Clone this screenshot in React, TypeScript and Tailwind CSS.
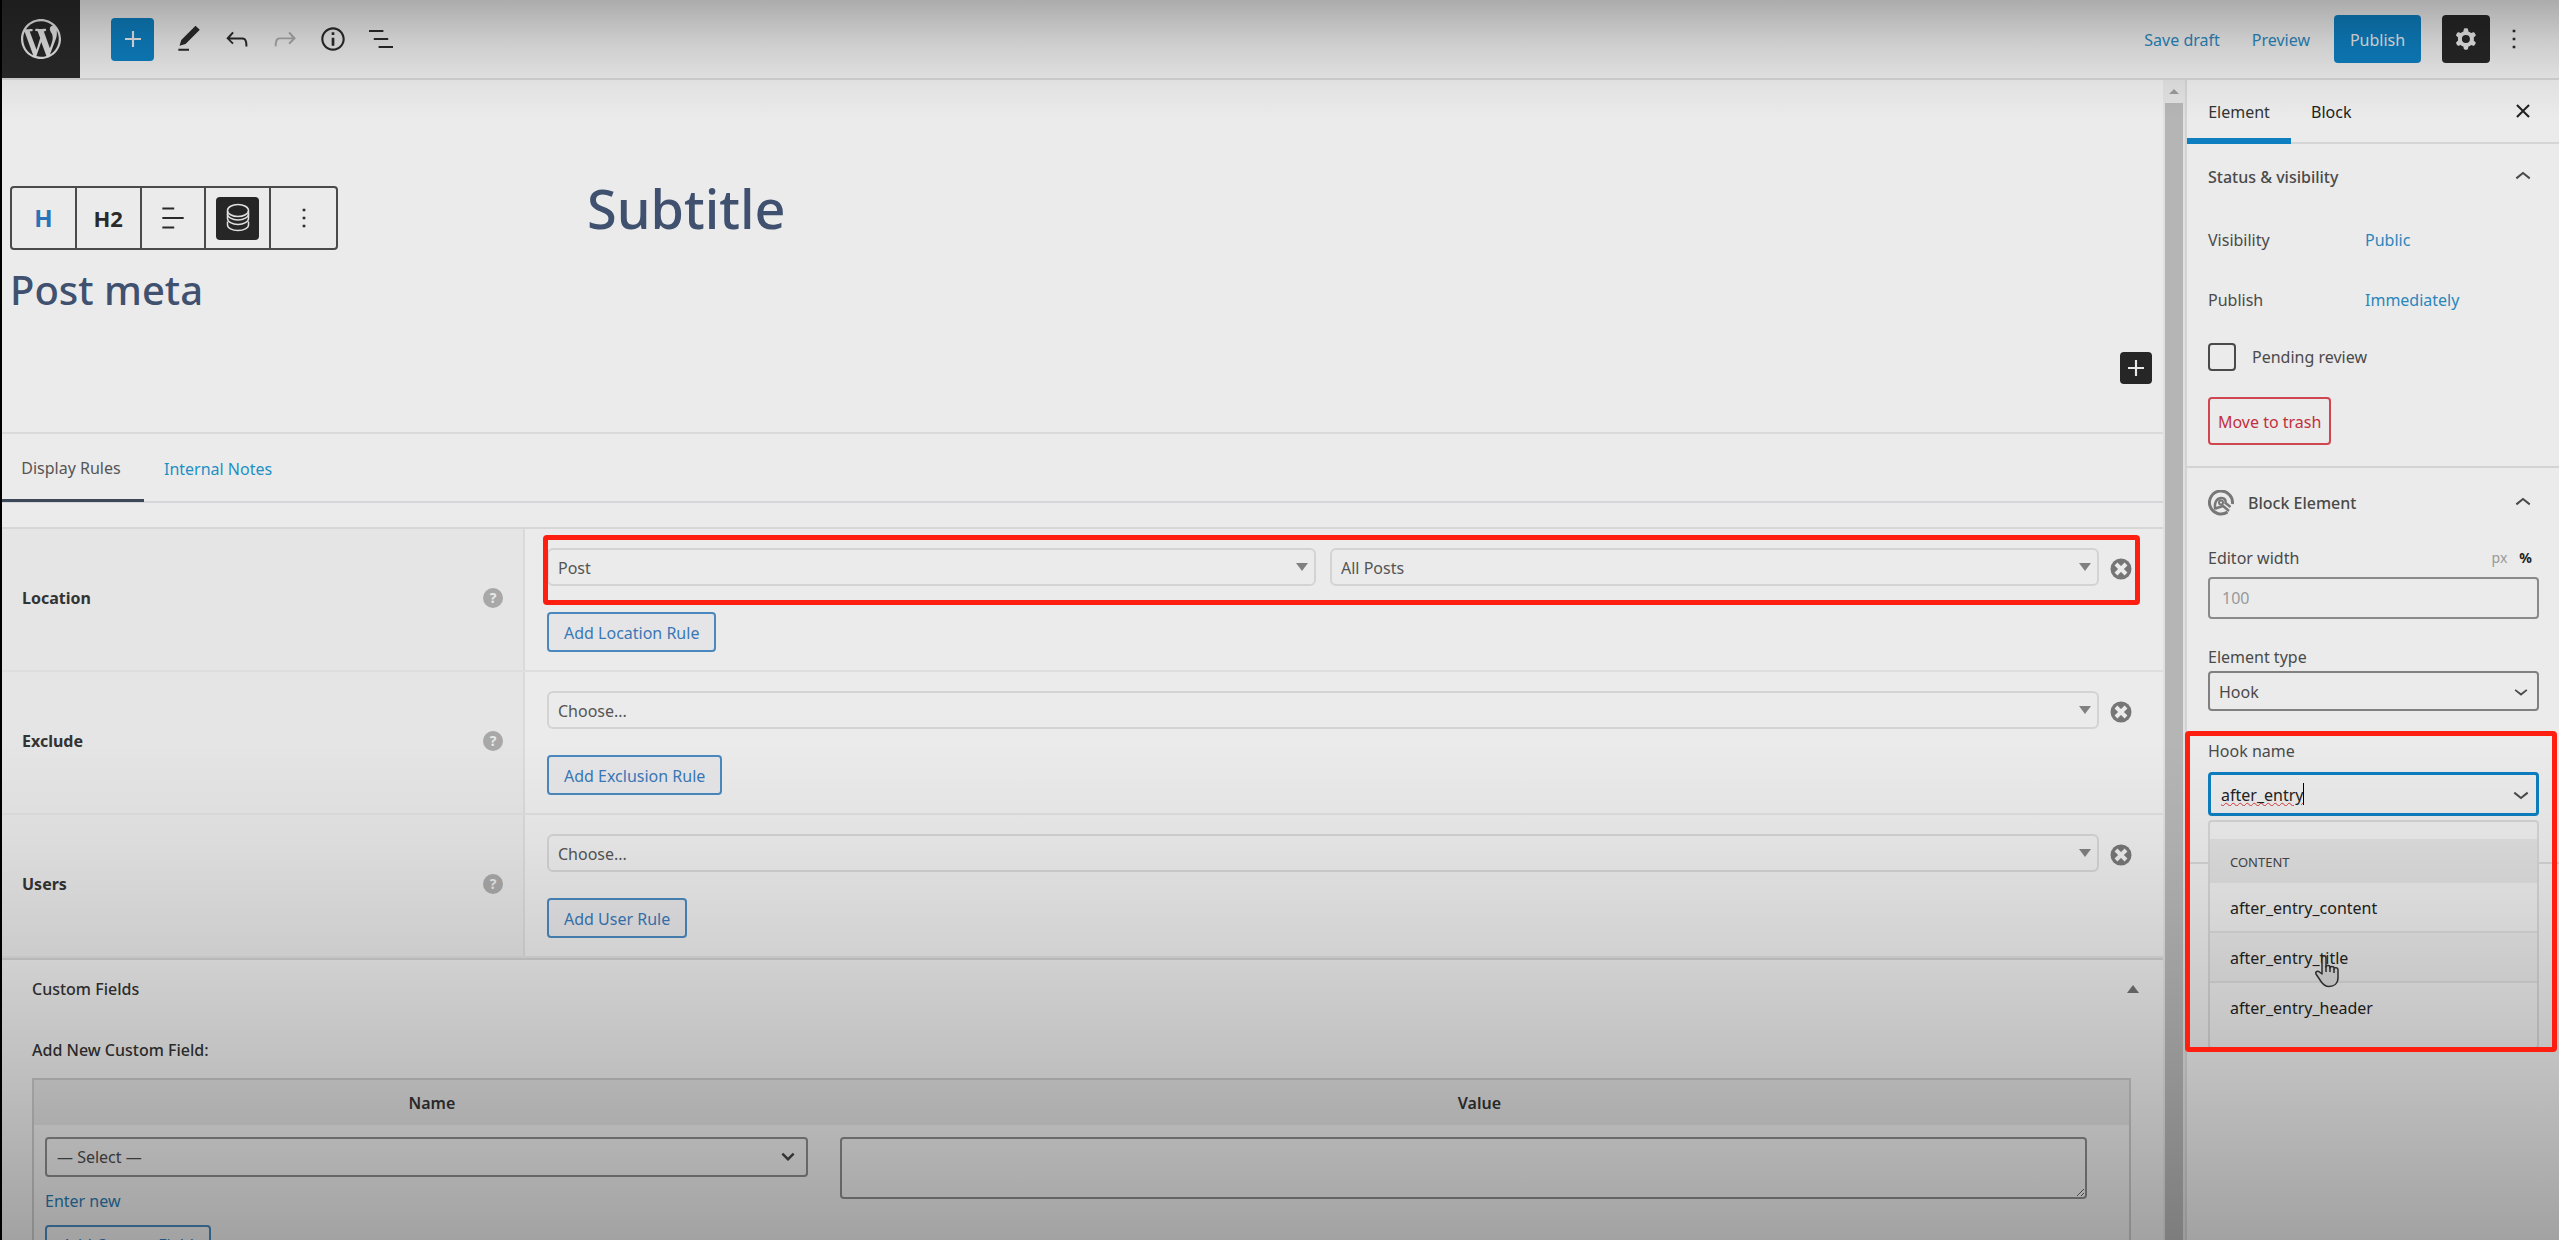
import React from "react";

type IconProps = { d: string; className?: string; viewBox?: string };

const Icon = ({ d, className = "size-8", viewBox = "0 0 24 24" }: IconProps) => (
  <svg viewBox={viewBox} className={className} fill="currentColor" fillRule="evenodd" aria-hidden="true">
    <path d={d} />
  </svg>
);

const icons = {
  wordpress:
    "M20 10c0-5.51-4.49-10-10-10C4.48 0 0 4.49 0 10c0 5.52 4.48 10 10 10 5.51 0 10-4.48 10-10zM7.78 15.37L4.37 6.22c.55-.02 1.17-.08 1.17-.08.5-.06.44-1.13-.06-1.11 0 0-1.45.11-2.37.11-.18 0-.37 0-.58-.01C4.12 2.69 6.87 1.11 10 1.11c2.33 0 4.45.87 6.05 2.34-.68-.11-1.65.39-1.65 1.58 0 .74.45 1.36.9 2.1.35.61.55 1.36.55 2.46 0 1.49-1.4 5-1.4 5l-3.03-8.37c.54-.02.82-.17.82-.17.5-.05.44-1.25-.06-1.22 0 0-1.44.12-2.38.12-.87 0-2.33-.12-2.33-.12-.5-.03-.56 1.2-.06 1.22l.92.08 1.26 3.41zM17.41 10c.24-.64.74-1.87.43-4.25.7 1.29 1.05 2.71 1.05 4.25 0 3.29-1.73 6.24-4.4 7.78.97-2.59 1.94-5.2 2.92-7.78zM6.1 18.09C3.12 16.65 1.11 13.53 1.11 10c0-1.3.23-2.48.72-3.59C3.25 10.3 4.67 14.2 6.1 18.09zm4.03-6.63l2.58 6.98c-.86.29-1.76.45-2.71.45-.79 0-1.57-.11-2.29-.33.81-2.38 1.62-4.74 2.42-7.1z",
  plus: "M18 11.2h-5.2V6h-1.6v5.2H6v1.6h5.2V18h1.6v-5.2H18z",
  edit: "M20.1 5.1L16.9 2 6.2 12.7l-1.3 4.4 4.5-1.3L20.1 5.1zM4 20.8h8v-1.5H4v1.5z",
  undo: "M18.3 11.7c-.6-.6-1.4-.9-2.3-.9H6.7l2.9-3.3-1.1-1-4.5 5L8.5 16l1-1-2.7-2.7H16c.5 0 .9.2 1.3.5 1 1 1 3.4 1 4.5v.3h1.5v-.2c0-1.5 0-4.3-1.5-5.7z",
  redo: "M15.6 6.5l-1.1 1 2.9 3.3H8c-.9 0-1.7.3-2.3.9-1.4 1.5-1.4 4.2-1.4 5.6v.2h1.5v-.3c0-1.1 0-3.5 1-4.5.3-.3.7-.5 1.3-.5h9.2L14.5 15l1.1 1.1 4.6-4.6-4.6-5z",
  info: "M12 3.2c-4.8 0-8.8 3.9-8.8 8.8 0 4.8 3.9 8.8 8.8 8.8 4.8 0 8.8-3.9 8.8-8.8 0-4.8-4-8.8-8.8-8.8zm0 16c-4 0-7.2-3.3-7.2-7.2C4.8 8 8 4.8 12 4.8s7.2 3.3 7.2 7.2c0 4-3.2 7.2-7.2 7.2zM11 17h2v-6h-2v6zm0-8h2V7h-2v2z",
  listView: "M13.8 5.2H3v1.5h10.8V5.2zm-3.6 12v1.5H21v-1.5H10.2zm7.2-6H6.6v1.5h10.8v-1.5z",
  cog: "M10.289 4.836A1 1 0 0111.275 4h1.306a1 1 0 01.987.836l.244 1.466c.787.26 1.503.679 2.108 1.218l1.393-.522a1 1 0 011.216.437l.653 1.13a1 1 0 01-.23 1.273l-1.148.944a6.025 6.025 0 010 2.435l1.149.946a1 1 0 01.23 1.272l-.653 1.13a1 1 0 01-1.216.437l-1.394-.522c-.605.54-1.32.958-2.108 1.218l-.244 1.466a1 1 0 01-.987.836h-1.306a1 1 0 01-.986-.836l-.244-1.466a5.995 5.995 0 01-2.108-1.218l-1.394.522a1 1 0 01-1.217-.436l-.653-1.131a1 1 0 01.23-1.272l1.149-.946a6.026 6.026 0 010-2.435l-1.148-.944a1 1 0 01-.23-1.272l.653-1.131a1 1 0 011.217-.437l1.393.522a5.994 5.994 0 012.108-1.218l.244-1.466zM14.929 12a3 3 0 11-6 0 3 3 0 016 0z",
  more: "M13 19h-2v-2h2v2zm0-6h-2v-2h2v2zm0-6h-2V5h2v2z",
  alignLeft: "M4 19.8h8.9v-1.5H4v1.5zm8.9-15.6H4v1.5h8.9V4.2zm-8.9 7v1.5h16v-1.5H4z",
  chevronUp: "M6.5 12.4L12 8l5.5 4.4-.9 1.2L12 10l-4.5 3.6-1-1.2z",
  chevronDown: "M17.5 11.6L12 16l-5.5-4.4.9-1.2L12 14l4.5-3.6 1 1.2z",
  chevronBold: "M5.500 9.500L7.200 7.800 12 12.600l4.800-4.800 1.700 1.700L12 16z",
  close: "M12 10.600l5.300-5.400 1.500 1.500-5.400 5.300 5.400 5.300-1.500 1.500-5.300-5.400-5.300 5.400-1.500-1.500 5.400-5.300-5.400-5.300 1.500-1.500z",
};

const DatabaseIcon = () => (
  <svg viewBox="0 0 24 30" className="h-[30px] w-6" fill="none" stroke="currentColor" strokeWidth="1.500" aria-hidden="true">
    <ellipse cx="12" cy="7.500" rx="10.500" ry="6" />
    <path d="M1.500 11c0 3.200 4.700 6 10.500 6s10.500-2.800 10.500-6" />
    <path d="M1.500 8v7.500c0 3.200 4.700 6 10.500 6s10.500-2.800 10.500-6V8" />
    <path d="M1.500 18.500v3.500c0 3 4.700 5.500 10.500 5.500s10.500-2.500 10.500-5.500v-3.500" />
  </svg>
);

const PremiumIcon = () => (
  <svg viewBox="0 0 26 26" className="size-[26px] text-[#777]" fill="none" stroke="currentColor" strokeWidth="3" aria-hidden="true">
    <path d="M24.400 14A11.500 11.500 0 1 0 19.500 22" />
    <path d="M7.500 19.500c-2-6 1-11.500 6-11.500 3.500 0 4.500 2.500 4 5l5 4" strokeWidth="2.500" />
    <path d="M7.500 18.500L15 16l6 5" strokeWidth="2.500" />
    <circle cx="13" cy="12.500" r="2" strokeWidth="2" />
  </svg>
);

const RemoveIcon = () => (
  <svg viewBox="0 0 22 22" className="size-[22px]" aria-hidden="true">
    <circle cx="11" cy="11" r="10.500" fill="#767676" />
    <path d="M6 6l10 10M16 6L6 16" stroke="#ebebeb" strokeWidth="4" />
  </svg>
);

const PointerIcon = () => (
  <svg viewBox="0 0 24 34" className="absolute left-[105px] top-[21px] h-[34px] w-6" fill="#d8d8d8" stroke="#333" strokeWidth="1.500" strokeLinejoin="round" aria-hidden="true">
    <path d="M7 20V4c0-3 4-3 4 0v9c0-2 4-2 4 0v1c0-2 4-2 4 0v1c0-2 4-1.500 4 .5v8c0 6-4 9-9 9-4 0-6-2-8-5l-5-7.500c-1-2.500 2-3.500 3.500-2z" />
    <path d="M11 12v6M15 13v5M19 15v4" />
  </svg>
);

const tools = [
  { label: "Edit", d: icons.edit },
  { label: "Undo", d: icons.undo },
  { label: "Redo", d: icons.redo, disabled: true },
  { label: "Details", d: icons.info },
  { label: "List view", d: icons.listView },
];

function Header() {
  return (
    <header className="flex h-20 shrink-0 items-center justify-between border-b-2 border-[#d3d3d3]">
      <div className="flex h-full items-center">
        <a href="#" aria-label="View posts" className="flex h-full w-[78px] items-center justify-center bg-[#282828] text-[#e4e4e4]">
          <Icon d={icons.wordpress} viewBox="0 0 20 20" className="size-10" />
        </a>
        <button aria-label="Add block" className="ml-[31px] flex size-[43px] items-center justify-center rounded-sm bg-[#0d7ebf] text-[#e8e8e8]">
          <Icon d={icons.plus} />
        </button>
        <div className="ml-[11px] flex">
          {tools.map((tool) => (
            <button
              key={tool.label}
              aria-label={tool.label}
              disabled={tool.disabled}
              className="flex size-12 items-center justify-center text-[#2a2a2a] disabled:text-[#aaa]"
            >
              <Icon d={tool.d} />
            </button>
          ))}
        </div>
      </div>
      <div className="flex items-center pr-[29px]">
        <button className="pt-0.5 text-[#2a86bb]">Save draft</button>
        <button className="ml-8 pt-0.5 text-[#2a86bb]">Preview</button>
        <button className="ml-6 h-12 w-[87px] rounded-sm bg-[#0d7ebf] pt-0.5 text-[#e8e8e8]">Publish</button>
        <button aria-label="Settings" className="ml-[21px] flex size-12 items-center justify-center rounded-sm bg-[#262626] text-[#e8e8e8]">
          <Icon d={icons.cog} />
        </button>
        <button aria-label="Options" className="ml-2 text-[#2a2a2a]">
          <Icon d={icons.more} />
        </button>
      </div>
    </header>
  );
}

function BlockToolbar() {
  const cell = "flex w-[65px] items-center justify-center";
  return (
    <div className="flex h-16 w-[328px] divide-x-2 divide-[#4a4a4a] rounded-sm border-2 border-[#4a4a4a]">
      <button className={`${cell} text-2xl font-bold text-[#2b73b8]`}>H</button>
      <button className={`${cell} text-[22px] font-bold`}>H2</button>
      <button aria-label="Align" className={cell}>
        <Icon d={icons.alignLeft} />
      </button>
      <button aria-label="Dynamic data" className={cell}>
        <span className="flex size-[43px] items-center justify-center rounded-sm bg-[#262626] text-[#e0e0e0]">
          <DatabaseIcon />
        </span>
      </button>
      <button aria-label="More" className={cell}>
        <Icon d={icons.more} />
      </button>
    </div>
  );
}

function RuleSelect({ label, value }: { label: string; value: string }) {
  return (
    <div className="relative flex-1">
      <select aria-label={label} defaultValue={value} className="h-[38px] w-full appearance-none rounded-md border-2 border-[#d3d3d3] px-[9px] pt-0.5 text-[#555]">
        <option>{value}</option>
      </select>
      <span className="pointer-events-none absolute right-2 top-[15px] border-x-[6px] border-t-8 border-x-transparent border-t-[#808080]" />
    </div>
  );
}

const rules = [
  { name: "Location", values: ["Post", "All Posts"], button: "Add Location Rule", marked: true },
  { name: "Exclude", values: ["Choose..."], button: "Add Exclusion Rule" },
  { name: "Users", values: ["Choose..."], button: "Add User Rule" },
];

function DisplayRules() {
  return (
    <div className="border-t-2 border-[#d6d6d6]">
      {rules.map((rule) => (
        <div key={rule.name} className="flex h-[143px] border-b-2 border-[#dedede]">
          <div className="flex w-[523px] items-center justify-between border-r-2 border-[#dadada] bg-[#e5e5e5] pb-1 pl-5 pr-5">
            <span className="font-bold text-[#333]">{rule.name}</span>
            <button aria-label={`About ${rule.name}`} className="size-5 rounded-full bg-[#a8a8a8] text-sm leading-5 font-bold text-[#e8e8e8]">
              ?
            </button>
          </div>
          <div className="flex-1 pt-[19px] pr-[31px] pl-[22px]">
            <div className="relative flex items-center gap-[11px]">
              <div className="flex flex-1 gap-[14px]">
                {rule.values.map((value) => (
                  <RuleSelect key={value} label={rule.name} value={value} />
                ))}
              </div>
              <button aria-label="Remove rule" className="pt-1">
                <RemoveIcon />
              </button>
              {rule.marked && <div className="pointer-events-none absolute -top-[13px] -right-2 -bottom-[19px] -left-1 z-30 rounded border-[5px] border-[#ff1f10]" />}
            </div>
            <button className="mt-[26px] h-10 rounded border-2 border-[#4a88bd] bg-[#e5e5e8] px-[15px] pt-0.5 text-[#3a78b5]">{rule.button}</button>
          </div>
        </div>
      ))}
    </div>
  );
}

function CustomFields() {
  return (
    <section className="border-t-2 border-[#cfcfcf] pr-8 pl-[30px]">
      <div className="flex h-[58px] items-center justify-between">
        <h2 className="font-medium text-[#333]">Custom Fields</h2>
        <button aria-label="Toggle custom fields" className="-mr-2 border-x-[6px] border-b-8 border-x-transparent border-b-[#707070]" />
      </div>
      <p className="mt-5 mb-4 leading-6 font-medium text-[#333]">Add New Custom Field:</p>
      <table className="w-full border-2 border-[#c6c6c6]">
        <thead className="h-[46px] bg-[#dedede]">
          <tr>
            <th className="w-[38%] font-semibold text-[#333]">Name</th>
            <th className="font-semibold text-[#333]">Value</th>
          </tr>
        </thead>
        <tbody>
          <tr className="align-top">
            <td className="px-[11px] pt-3">
              <div className="relative">
                <select aria-label="Field name" className="h-10 w-[763px] max-w-full appearance-none rounded border-2 border-[#8a8a8a] px-[10px] text-[#4a4a4a]">
                  <option>— Select —</option>
                </select>
                <Icon d={icons.chevronBold} className="pointer-events-none absolute top-2 left-[731px] size-6 text-[#444]" />
              </div>
              <button className="mt-3 block leading-6 text-[#2a78ad]">Enter new</button>
              <button className="mt-3 h-10 rounded border-2 border-[#4a88bd] px-[15px] whitespace-nowrap text-[#3a78b5]">Add Custom Field</button>
            </td>
            <td className="pt-3 pr-[42px] pl-[10px]">
              <textarea aria-label="Field value" className="h-[62px] w-full rounded border-2 border-[#8a8a8a]" />
            </td>
          </tr>
        </tbody>
      </table>
    </section>
  );
}

function Editor() {
  return (
    <main className="min-w-0 flex-1">
      <div className="relative h-[354px] border-b-2 border-[#dadada] pt-[92px] pl-2 text-[#40506f]">
        <div className="flex gap-[249px]">
          <div className="pt-[14px] text-[#2a2a2a]">
            <BlockToolbar />
          </div>
          <h1 className="text-[54px] leading-[72px] font-medium">Subtitle</h1>
        </div>
        <h2 className="mt-[14px] text-[40px] leading-[52px] font-medium">Post meta</h2>
        <button aria-label="Add block" className="absolute right-[11px] bottom-12 flex size-8 items-center justify-center rounded-sm bg-[#262626] text-[#e8e8e8]">
          <Icon d={icons.plus} />
        </button>
      </div>
      <div className="flex h-[69px] border-b-2 border-[#d5d5da]">
        <button className="h-[68px] w-[142px] border-b-[3px] border-[#3c4858] pt-0.5 pr-1 text-center text-[#555]">Display Rules</button>
        <button className="ml-5 pt-0.5 text-[#1f8fc4]">Internal Notes</button>
      </div>
      <div className="h-6" />
      <DisplayRules />
      <CustomFields />
    </main>
  );
}

const hooks = ["after_entry_content", "after_entry_title", "after_entry_header"];

function Sidebar() {
  return (
    <aside className="w-[374px] shrink-0 border-l-2 border-[#d3d3d3] text-[#4a4a4a]">
      <div className="flex h-16 border-b-2 border-[#d5d5d5]">
        <button className="h-16 w-[104px] border-b-6 border-[#0d7ebf] pt-1.5 text-[#333]">Element</button>
        <button className="px-5 pt-0.5 text-[#222]">Block</button>
        <button aria-label="Close settings" className="mr-6 ml-auto text-[#222]">
          <Icon d={icons.close} className="size-6" />
        </button>
      </div>
      <section className="border-b-2 border-[#d3d3d3] px-[21px] pr-5 pb-[21px]">
        <button className="flex h-[66px] w-full items-center justify-between font-medium">
          Status &amp; visibility
          <Icon d={icons.chevronUp} />
        </button>
        <div className="flex h-[60px] items-center">
          <span className="w-[157px]">Visibility</span>
          <button className="text-[#2a86bb]">Public</button>
        </div>
        <div className="flex h-[60px] items-center">
          <span className="w-[157px]">Publish</span>
          <button className="text-[#2a86bb]">Immediately</button>
        </div>
        <label className="mt-[13px] flex items-center gap-4">
          <input type="checkbox" className="size-7 appearance-none rounded border-2 border-[#4a4a4a]" />
          Pending review
        </label>
        <button className="mt-[26px] h-12 rounded-sm border-2 border-[#cf4550] px-2 pt-0.5 text-[#c2303f]">Move to trash</button>
      </section>
      <section className="h-[396px] border-b-2 border-[#d3d3d3] pr-5 pl-[21px]">
        <button className="flex h-[70px] w-full items-center gap-[14px] font-medium">
          <PremiumIcon />
          Block Element
          <Icon d={icons.chevronUp} className="ml-auto size-8" />
        </button>
        <div className="flex h-[39px] items-center">
          <label htmlFor="width">Editor width</label>
          <button className="ml-auto text-sm text-[#999]">px</button>
          <button className="mr-[7px] ml-3 text-sm font-bold text-[#222]">%</button>
        </div>
        <input id="width" placeholder="100" className="block h-[42px] w-full rounded-sm border-2 border-[#8a8a8a] px-3 placeholder:text-[#999]" />
        <label htmlFor="type" className="mt-6 block leading-7">
          Element type
        </label>
        <div className="relative">
          <select id="type" className="block h-10 w-full appearance-none rounded-sm border-2 border-[#808080] px-[9px] pt-0.5">
            <option>Hook</option>
          </select>
          <Icon d={icons.chevronDown} className="pointer-events-none absolute top-1.5 right-1 size-7" />
        </div>
        <div className="relative -mr-5 -ml-[21px] mt-5 h-[321px] pr-5 pl-[21px]">
          <div className="pointer-events-none absolute inset-y-0 -left-0.5 right-0.5 z-30 rounded border-[5px] border-[#ff1f10]" />
          <label htmlFor="hook" className="block h-[41px] pt-2 leading-6">
            Hook name
          </label>
          <div className="relative">
            <input
              id="hook"
              role="combobox"
              aria-expanded="true"
              aria-controls="hook-list"
              defaultValue="after_entry"
              className="block h-[44px] w-full rounded border-[3px] border-[#0d7ebf] px-[10px] pt-0.5 text-[#222] underline decoration-[#d63638] decoration-wavy decoration-1"
            />
            <span className="pointer-events-none absolute top-[11px] left-[95px] h-[22px] w-px bg-black" />
            <Icon d={icons.chevronDown} className="pointer-events-none absolute top-1.5 right-0.5 size-8" />
          </div>
          <ul id="hook-list" role="listbox" className="relative z-10 mt-1 rounded border-2 border-[#d3d3d3] bg-[#ebebeb] pt-[17px] pb-[14px] text-[#222]">
            <li className="h-11 bg-[#dedede] px-5 text-[13px] leading-[46px] text-[#444]">CONTENT</li>
            {hooks.map((hook) => (
              <li
                key={hook}
                role="option"
                aria-selected={hook === "after_entry_title"}
                className="relative h-[50px] border-b-2 border-[#dadada] px-5 leading-[50px] last:border-0 aria-selected:bg-[#e6e6e6]"
              >
                {hook}
                {hook === "after_entry_title" && <PointerIcon />}
              </li>
            ))}
          </ul>
        </div>
      </section>
    </aside>
  );
}

export default function App() {
  return (
    <div className="relative flex h-screen flex-col overflow-hidden border-l-2 border-black bg-[#ebebeb] font-['Noto_Sans','Open_Sans',sans-serif] text-base text-[#2a2a2a]">
      <Header />
      <div className="flex min-h-0 flex-1">
        <Editor />
        <div className="flex w-[22px] shrink-0 flex-col items-center bg-[#e0e0e0]">
          <span className="my-[9px] border-x-[5px] border-b-[5px] border-x-transparent border-b-[#999]" />
          <div className="w-[18px] flex-1 bg-[#b5b5b5]" />
        </div>
        <Sidebar />
      </div>
      {/* vignette over the whole editor */}
      <div className="pointer-events-none absolute inset-x-0 top-0 z-20 h-[120px] bg-[linear-gradient(to_bottom,rgba(0,0,0,0.27),rgba(0,0,0,0.13)_35%,rgba(0,0,0,0.04)_70%,transparent)]" />
      <div className="pointer-events-none absolute inset-x-0 bottom-0 z-20 h-[500px] bg-[linear-gradient(to_top,rgba(0,0,0,0.31),rgba(0,0,0,0.19)_33%,rgba(0,0,0,0.11)_57%,rgba(0,0,0,0.04)_80%,transparent)]" />
    </div>
  );
}
